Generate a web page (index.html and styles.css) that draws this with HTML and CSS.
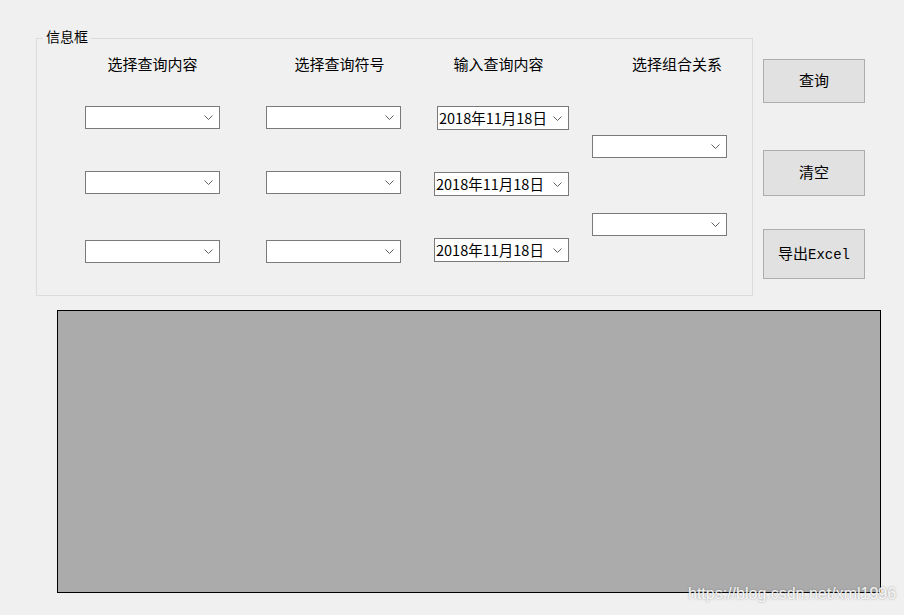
FILE: index.html
```html
<!DOCTYPE html>
<html lang="zh-CN">
<head>
  <meta charset="UTF-8">
  <title>查询</title>
  <link rel="stylesheet" href="styles.css">
</head>
<body>
  <div class="window">
    <div class="top">
      <div class="group">
        <span class="legend">信息框</span>
        <div class="col col-field">
          <div class="head">选择查询内容</div>
          <div class="combo r1"><svg class="arrow" viewBox="0 0 9 5"><path d="M0.5 0.5 L4.5 4.5 L8.5 0.5"/></svg></div>
          <div class="combo r2"><svg class="arrow" viewBox="0 0 9 5"><path d="M0.5 0.5 L4.5 4.5 L8.5 0.5"/></svg></div>
          <div class="combo r3"><svg class="arrow" viewBox="0 0 9 5"><path d="M0.5 0.5 L4.5 4.5 L8.5 0.5"/></svg></div>
        </div>
        <div class="col col-op">
          <div class="head">选择查询符号</div>
          <div class="combo r1"><svg class="arrow" viewBox="0 0 9 5"><path d="M0.5 0.5 L4.5 4.5 L8.5 0.5"/></svg></div>
          <div class="combo r2"><svg class="arrow" viewBox="0 0 9 5"><path d="M0.5 0.5 L4.5 4.5 L8.5 0.5"/></svg></div>
          <div class="combo r3"><svg class="arrow" viewBox="0 0 9 5"><path d="M0.5 0.5 L4.5 4.5 L8.5 0.5"/></svg></div>
        </div>
        <div class="col col-value">
          <div class="head">输入查询内容</div>
          <div class="date d1"><span>2018年11月18日</span><svg class="arrow" viewBox="0 0 9 5"><path d="M0.5 0.5 L4.5 4.5 L8.5 0.5"/></svg></div>
          <div class="date d2"><span>2018年11月18日</span><svg class="arrow" viewBox="0 0 9 5"><path d="M0.5 0.5 L4.5 4.5 L8.5 0.5"/></svg></div>
          <div class="date d3"><span>2018年11月18日</span><svg class="arrow" viewBox="0 0 9 5"><path d="M0.5 0.5 L4.5 4.5 L8.5 0.5"/></svg></div>
        </div>
        <div class="col col-join">
          <div class="head">选择组合关系</div>
          <div class="combo j1"><svg class="arrow" viewBox="0 0 9 5"><path d="M0.5 0.5 L4.5 4.5 L8.5 0.5"/></svg></div>
          <div class="combo j2"><svg class="arrow" viewBox="0 0 9 5"><path d="M0.5 0.5 L4.5 4.5 L8.5 0.5"/></svg></div>
        </div>
      </div>
      <div class="buttons">
        <button class="btn btn-query">查询</button>
        <button class="btn btn-clear">清空</button>
        <button class="btn btn-export">导出<span class="latin">Excel</span></button>
      </div>
    </div>
    <div class="grid-view"></div>
    <span class="watermark">https://blog.csdn.net/xml1996</span>
  </div>
</body>
</html>
```

FILE: styles.css
```css
body {
  margin: 0;
  background: #f0f0f0;
  font-family: "Noto Sans CJK SC", "Noto Sans", sans-serif;
  color: #000;
}
.window {
  position: relative;
  width: 904px;
  height: 615px;
  overflow: hidden;
}
.top {
  display: flex;
  align-items: flex-start;
}
.group {
  position: relative;
  box-sizing: border-box;
  width: 717px;
  height: 258px;
  margin: 38px 0 0 36px;
  border: 1px solid #dcdcdc;
  display: flex;
  padding: 15px 0 0 48px;
}
.legend {
  position: absolute;
  top: -13px;
  left: 6px;
  padding: 0 3px;
  background: #f0f0f0;
  font-size: 14px;
  line-height: 20px;
}
.col {
  width: 135px;
  display: flex;
  flex-direction: column;
}
.col-op { margin-left: 46px; }
.col-value { margin-left: 33px; }
.col-join { margin-left: 23px; }
.head {
  height: 20px;
  line-height: 20px;
  font-size: 15px;
  text-align: center;
  white-space: nowrap;
}
.col-op .head { padding-left: 12px; }
.col-value .head { padding-right: 6px; }
.col-join .head { padding-left: 35px; }

.combo, .date {
  box-sizing: border-box;
  border: 1px solid #7a7a7a;
  background: #fff;
  display: flex;
  align-items: center;
  justify-content: flex-end;
  padding-right: 6px;
}
.combo {
  height: 23px;
}
.r1 { margin-top: 32px; }
.r2 { margin-top: 42px; }
.r3 { margin-top: 46px; }
.j1 { margin-top: 61px; }
.j2 { margin-top: 55px; }

.date {
  height: 24px;
  justify-content: space-between;
  padding-left: 1px;
  padding-bottom: 2px;
  font-size: 14.5px;
  white-space: nowrap;
}
.date .arrow { margin-top: 2px; }
.d1 { margin-top: 32px; margin-left: 3px; }
.d2 { margin-top: 42px; }
.d3 { margin-top: 42px; }

.arrow {
  width: 9px;
  height: 5px;
  fill: none;
  stroke: #606060;
  stroke-width: 1;
}

.buttons {
  display: flex;
  flex-direction: column;
  margin: 59px 0 0 10px;
}
.btn {
  box-sizing: border-box;
  width: 102px;
  background: #e1e1e1;
  border: 1px solid #adadad;
  border-radius: 0;
  font-family: "Noto Sans CJK SC", sans-serif;
  font-size: 15px;
  color: #000;
  padding: 0 0 3px;
}
.btn-query { height: 44px; }
.btn-clear { height: 46px; margin-top: 47px; }
.btn-export { height: 50px; margin-top: 33px; }
.latin {
  font-family: "Liberation Mono", monospace;
  font-size: 14px;
}

.grid-view {
  box-sizing: border-box;
  width: 824px;
  height: 283px;
  margin: 14px 0 0 57px;
  background: #ababab;
  border: 1px solid #000;
}
.watermark {
  position: absolute;
  left: 688px;
  top: 585px;
  font-family: "Liberation Sans", sans-serif;
  font-size: 16px;
  line-height: 18px;
  color: rgba(255, 255, 255, 0.9);
  text-shadow: 0 0 2px rgba(110, 110, 110, 0.7);
  white-space: nowrap;
}
```
